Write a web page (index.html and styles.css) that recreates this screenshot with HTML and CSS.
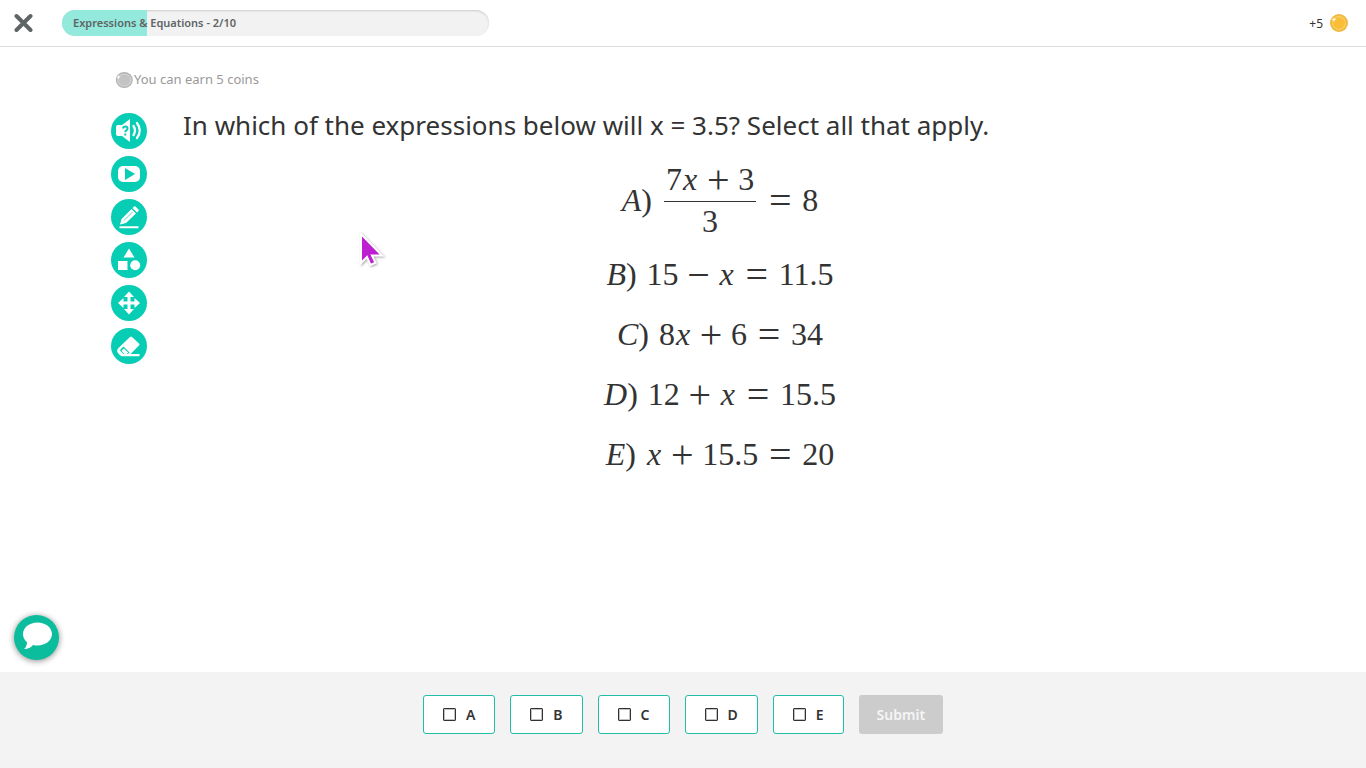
FILE: index.html
```html
<!DOCTYPE html>
<html lang="en">
<head>
<meta charset="utf-8">
<title>Expressions &amp; Equations</title>
<link rel="stylesheet" href="styles.css">
</head>
<body>
<header class="topbar">
  <button class="close" type="button" aria-label="Close">
    <svg width="20" height="20" viewBox="0 0 20 20"><path d="M2.500 3 16.500 17M16.500 3 2.500 17" stroke="#5f6465" stroke-width="4" stroke-linecap="round"/></svg>
  </button>
  <div class="progress"><div class="progress-fill" style="width:20%"></div><span class="progress-text">Expressions &amp; Equations - 2/10</span></div>
  <div class="coins"><span>+5</span>
    <svg width="18" height="18" viewBox="0 0 18 18"><circle cx="9" cy="9" r="9" fill="#efb73e"/><circle cx="9" cy="9" r="7.2" fill="#f9ce5e"/><circle cx="9" cy="9" r="5.8" fill="#fabd38"/><path d="m4 3 .7 1.8 1.8.7-1.8.7L4 8l-.7-1.8-1.8-.7 1.8-.7z" fill="#fff" fill-opacity=".85"/></svg>
  </div>
</header>
<main class="content">
  <p class="earn"><svg width="18" height="16" viewBox="0 0 18 16"><ellipse cx="9.300" cy="8" rx="8.500" ry="8" fill="#b5b5b5"/><ellipse cx="9.300" cy="8" rx="7.200" ry="6.600" fill="#d2d2d2"/><ellipse cx="9.300" cy="8" rx="6" ry="5.500" fill="#c3c3c3"/><path d="m3.500 3 .6 1.600 1.600.6-1.600.6-.6 1.600-.6-1.600-1.600-.6 1.600-.6z" fill="#fff"/></svg>You can earn 5 coins</p>
  <div class="work">
    <nav class="tools" aria-label="Tools">
      <button class="tool" type="button" aria-label="Read question"><svg viewBox="0 0 36 36"><path d="M7 12h4l8-6v23l-8-6H7q-2 0-2-2v-7q0-2 2-2z" fill="#fff"/><path d="M22.500 13q3 4.500 0 9M26 10q5.500 7.500 0 15" fill="none" stroke="#fff" stroke-width="2.300" stroke-linecap="round"/><path d="M12 15.500q.3-2 2.300-2 2.300 0 2.200 2 0 1.200-1.200 1.900-1 .6-1 1.800M14.200 20.500v2" fill="none" stroke="#06cdb4" stroke-width="2"/></svg></button>
      <button class="tool" type="button" aria-label="Video"><svg viewBox="0 0 36 36"><rect x="7" y="10" width="22" height="16" rx="5" fill="#fff"/><path d="m14 12 10 6-10 6z" fill="#06cdb4"/></svg></button>
      <button class="tool" type="button" aria-label="Draw"><svg viewBox="0 0 36 36"><path d="M9 25.500 10.500 20 20.500 10 25 14.500 15 24zM21.500 9 23 7.500q.7-.7 1.500 0L27.500 10.500q.7.7 0 1.500L26 13.500zM8.500 27.200h19v2h-19z" fill="#fff"/><path d="m13 21.500 8.500-8.500" stroke="#06cdb4" stroke-width=".7"/></svg></button>
      <button class="tool" type="button" aria-label="Shapes"><svg viewBox="0 0 36 36"><path d="m18 6.500 5.500 9h-11zM7 19h9.500v9H7z" fill="#fff"/><circle cx="24.200" cy="23.200" r="5" fill="#fff"/></svg></button>
      <button class="tool" type="button" aria-label="Move"><svg viewBox="0 0 36 36"><path d="M18 10v16M10 18h16" stroke="#fff" stroke-width="3"/><path d="m18 6.500 5 5.500H13zM18 29.500l5-5.500H13zM7 18l5.500-5v10zM29 18l-5.500-5v10z" fill="#fff"/></svg></button>
      <button class="tool" type="button" aria-label="Erase"><svg viewBox="0 0 36 36"><path d="m7.500 20 11.500-11q1-.9 2 .1L28 15.500q1 1 0 2L19.500 26H28.500v2.200H11.500q-1.500 0-2.500-1L7 25q-2-2.500.5-5z" fill="#fff"/><path d="m12.500 18.500 6 6-1.500 1.500h-4.500L9.500 23q-.7-.8 0-1.600z" fill="#06cdb4"/><path d="m12.800 20.500 4.400 4-1.400 1.500h-2.500l-2.700-3.200z" fill="#fff"/></svg></button>
    </nav>
    <section class="question">
      <h1 class="prompt">In which of the expressions below will x = 3.5? Select all that apply.</h1>
      <div class="equations">
        <div class="eq eq-tall"><span class="tag"><i>A</i>)</span><span class="frac"><span class="num">7<i class="var">x</i><span class="op">+</span>3</span><span class="den">3</span></span><span class="op rel">=</span>8</div>
        <div class="eq"><span class="tag"><i>B</i>)</span>15<span class="op">−</span><i class="var">x</i><span class="op rel">=</span>11.5</div>
        <div class="eq"><span class="tag"><i>C</i>)</span>8<i class="var">x</i><span class="op">+</span>6<span class="op rel">=</span>34</div>
        <div class="eq"><span class="tag"><i>D</i>)</span>12<span class="op">+</span><i class="var">x</i><span class="op rel">=</span>15.5</div>
        <div class="eq"><span class="tag"><i>E</i>)</span><i class="var">x</i><span class="op">+</span>15.5<span class="op rel">=</span>20</div>
      </div>
    </section>
  </div>
</main>
<footer class="answers">
  <label class="choice"><input type="checkbox">A</label>
  <label class="choice"><input type="checkbox">B</label>
  <label class="choice"><input type="checkbox">C</label>
  <label class="choice"><input type="checkbox">D</label>
  <label class="choice"><input type="checkbox">E</label>
  <button class="submit" type="button" disabled>Submit</button>
</footer>
<button class="chat" type="button" aria-label="Chat"><svg width="45" height="45" viewBox="0 0 45 45"><path d="M23.500 7.500C15.500 7.500 9 12.500 9 19c0 3.500 1.500 6 4 8.200 0 3-1 5-3 6.800 4 0 7-1.500 9-4 1.500.4 3 .5 4.500.5C31.500 30.500 38 25.500 38 19S31.500 7.500 23.500 7.500z" fill="#fff"/></svg></button>
<svg class="pointer" width="30" height="38" viewBox="0 0 30 38"><path d="M5 3v29l6-6 3.500 8 5-2.300-3.500-7.200H26z" fill="#bd20d0" stroke="#fff" stroke-width="2"/></svg>
</body>
</html>
```
FILE: styles.css
```css
* { box-sizing: border-box; }
body {
  margin: 0;
  min-height: 100vh;
  display: flex;
  flex-direction: column;
  background: #fff;
  color: #333;
  font-family: "Noto Sans", "Open Sans", sans-serif;
}
button { border: 0; padding: 0; background: none; font: inherit; }
svg { display: block; flex: none; }

.topbar {
  display: flex;
  align-items: center;
  height: 47px;
  padding: 0 18px 0 14px;
  border-bottom: 1px solid #ddd;
}
.close { margin-right: 28px; }
.progress {
  position: relative;
  width: 427px;
  height: 26px;
  border-radius: 13px;
  overflow: hidden;
  background: #f2f2f2;
  box-shadow: inset 0 1px 2px #ccc;
}
.progress-fill { height: 100%; background: #93e9dc; }
.progress-text {
  position: absolute;
  left: 11px;
  top: 0;
  font-size: 11px;
  line-height: 26px;
  font-weight: 600;
  color: #5f6465;
}
.coins {
  display: flex;
  align-items: center;
  gap: 7px;
  margin-left: auto;
  font-size: 12px;
}

.content { flex: 1; padding: 22px 109px 0 111px; }
.earn {
  display: flex;
  align-items: center;
  margin: 0;
  padding-left: 4px;
  font-size: 13px;
  line-height: 20px;
  color: #999;
}
.earn svg { margin: 2px 1px 0 0; }
.work { display: flex; gap: 36px; padding-top: 22px; }
.tools { display: flex; flex-direction: column; gap: 7px; padding-top: 2px; }
.tool {
  width: 36px;
  height: 36px;
  border-radius: 50%;
  background: #06cdb4;
}
.question { flex: 1; }
.prompt {
  margin: 0;
  font-size: 26px;
  line-height: 28px;
  font-weight: 400;
}
.equations {
  display: flex;
  flex-direction: column;
  align-items: center;
  padding-top: 25px;
  font-family: "Liberation Serif", serif;
  font-size: 32px;
}
.eq { display: flex; align-items: center; height: 60px; line-height: 36px; }
.eq-tall { height: 72px; margin-bottom: 8px; }
.tag { margin-right: 10px; }
.var { padding: 0 1px; }
.op { width: 40px; padding-top: 2px; text-align: center; font-size: 40px; line-height: 34px; }
.rel { width: 44px; }
.frac { display: flex; flex-direction: column; align-items: center; margin: 0 2px; }
.num { display: flex; padding: 0 2px 4px; border-bottom: 1px solid #333; }
.den { padding-top: 1px; }

.answers {
  display: flex;
  justify-content: center;
  align-items: flex-start;
  gap: 15px;
  height: 96px;
  padding-top: 23px;
  background: #f3f3f3;
  font-size: 14px;
  font-weight: 600;
}
.choice {
  display: flex;
  align-items: center;
  gap: 10px;
  height: 39px;
  padding: 0 19px;
  border: 1px solid #21bda5;
  border-radius: 3px;
  background: #fff;
}
.choice input {
  appearance: none;
  width: 13px;
  height: 13px;
  margin: 0;
  border: 1px solid #333;
  outline: 1px solid #8888;
  outline-offset: -2px;
  border-radius: 1px;
}
.choice input:checked { background: #21bda5; }
.submit {
  height: 39px;
  padding: 0 18px;
  border-radius: 3px;
  background: #ccc;
  color: #f5f5f5;
}
.chat {
  position: fixed;
  left: 14px;
  bottom: 108px;
  width: 45px;
  height: 45px;
  border-radius: 50%;
  background: #0bbd9c;
  box-shadow: 0 1px 6px #0007;
}
.pointer {
  position: absolute;
  left: 356px;
  top: 231px;
  pointer-events: none;
  filter: drop-shadow(1px 1px 1px #0005);
}
```
